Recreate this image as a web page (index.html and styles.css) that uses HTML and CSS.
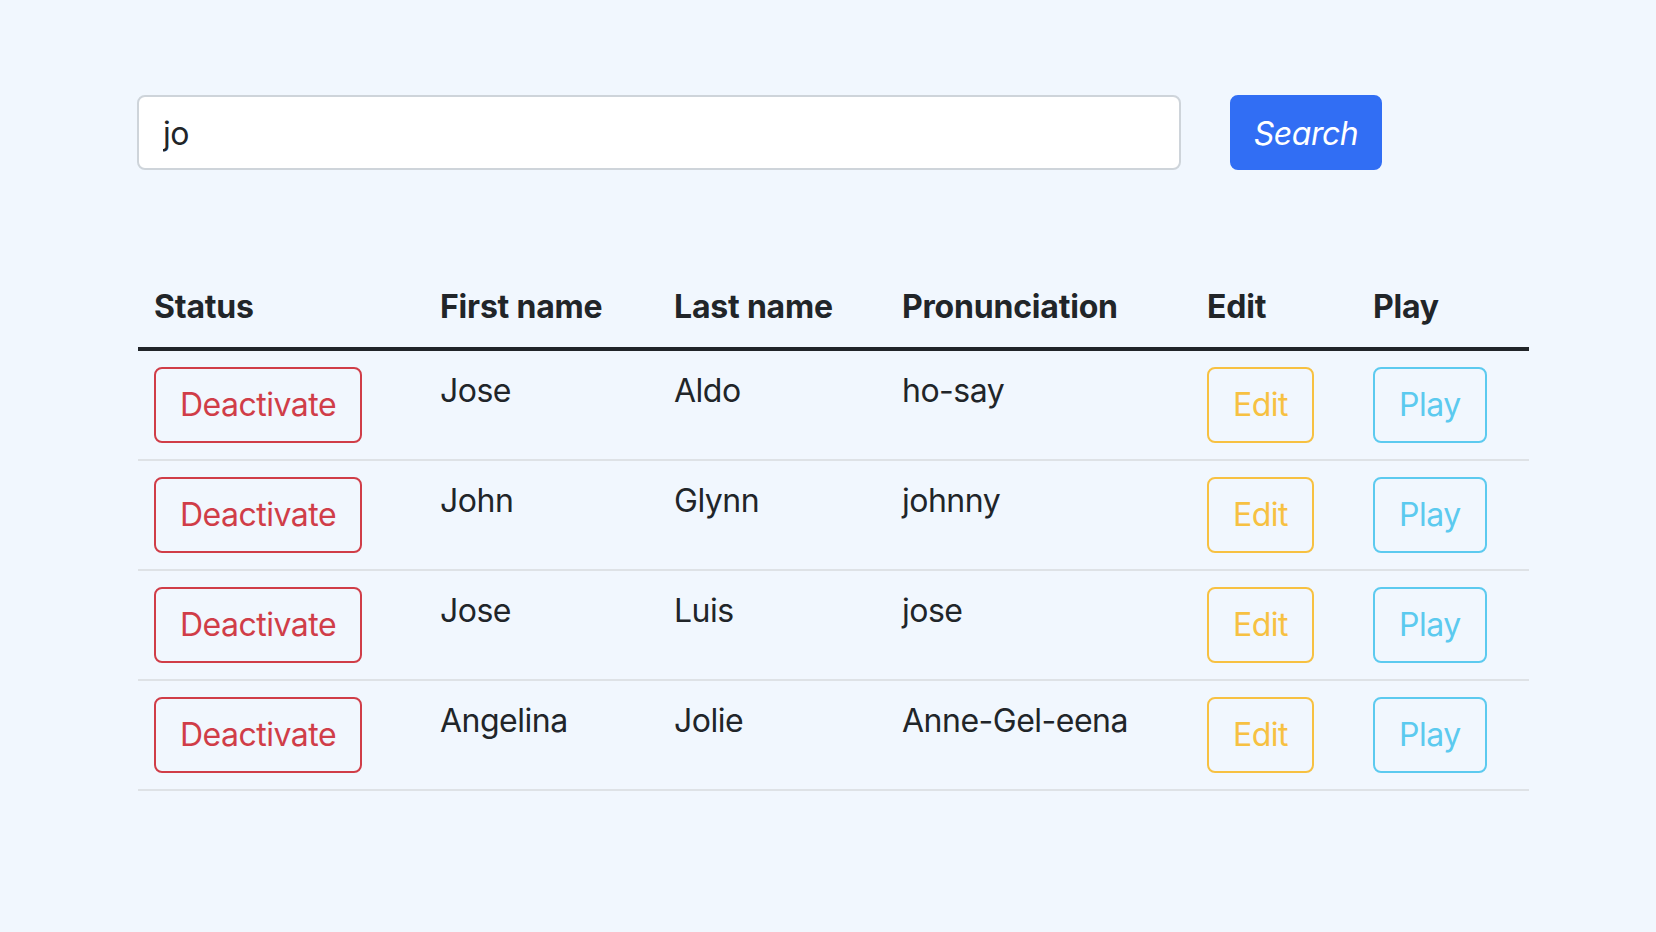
FILE: index.html
```html
<!DOCTYPE html>
<html lang="en">
<head>
<meta charset="utf-8">
<title>Names</title>
<link rel="stylesheet" href="styles.css">
</head>
<body>
<main class="page">
  <form class="search-row">
    <input class="search-input" type="text" value="jo">
    <button class="btn btn-search" type="button">Search</button>
  </form>
  <table class="names">
    <colgroup>
      <col class="c-status"><col class="c-first"><col class="c-last"><col class="c-pron"><col class="c-edit"><col class="c-play">
    </colgroup>
    <thead>
      <tr><th>Status</th><th>First name</th><th>Last name</th><th>Pronunciation</th><th>Edit</th><th>Play</th></tr>
    </thead>
    <tbody>
      <tr><td><button class="btn btn-red">Deactivate</button></td><td>Jose</td><td>Aldo</td><td>ho-say</td><td><button class="btn btn-yellow">Edit</button></td><td><button class="btn btn-cyan">Play</button></td></tr>
      <tr><td><button class="btn btn-red">Deactivate</button></td><td>John</td><td>Glynn</td><td>johnny</td><td><button class="btn btn-yellow">Edit</button></td><td><button class="btn btn-cyan">Play</button></td></tr>
      <tr><td><button class="btn btn-red">Deactivate</button></td><td>Jose</td><td>Luis</td><td>jose</td><td><button class="btn btn-yellow">Edit</button></td><td><button class="btn btn-cyan">Play</button></td></tr>
      <tr><td><button class="btn btn-red">Deactivate</button></td><td>Angelina</td><td>Jolie</td><td>Anne-Gel-eena</td><td><button class="btn btn-yellow">Edit</button></td><td><button class="btn btn-cyan">Play</button></td></tr>
    </tbody>
  </table>
</main>
</body>
</html>
```

FILE: styles.css
```css
html, body {
  margin: 0;
  padding: 0;
}
body {
  background: #f1f7fe;
  color: #212529;
  font-family: Inter, "Noto Sans", "Liberation Sans", sans-serif;
  font-size: 32px;
  line-height: 1.5;
  letter-spacing: -0.5px;
}
.page {
  padding: 95px 0 0 137px;
}
.search-row {
  display: flex;
  gap: 49px;
  margin: 0;
}
.search-input {
  box-sizing: border-box;
  width: 1044px;
  height: 75px;
  padding: 2px 24px 0;
  border: 2px solid #ced4da;
  border-radius: 8px;
  background: #fff;
  color: #212529;
  font-family: inherit;
  font-size: 32px;
  letter-spacing: -0.5px;
  outline: none;
}
.btn {
  box-sizing: border-box;
  height: 76px;
  padding: 0 24px;
  border: 2px solid transparent;
  border-radius: 8px;
  background: transparent;
  font-family: inherit;
  font-size: 32px;
  line-height: 48px;
  letter-spacing: -0.5px;
  cursor: pointer;
}
.btn-search {
  width: 152px;
  height: 75px;
  padding: 2px 0 0;
  background: #316ef4;
  border-color: #316ef4;
  color: #fff;
  font-style: italic;
}
.btn-red { border-color: #d03d48; color: #d03d48; }
.btn-yellow { border-color: #f7c142; color: #f7c142; }
.btn-cyan { border-color: #5ccaef; color: #5ccaef; }

.names {
  margin: 97px 0 0 1px;
  width: 1391px;
  table-layout: fixed;
  border-collapse: collapse;
}
.c-status { width: 286px; }
.c-first { width: 234px; }
.c-last { width: 228px; }
.c-pron { width: 305px; }
.c-edit { width: 166px; }
.c-play { width: 172px; }
.names th, .names td {
  padding: 16px;
  text-align: left;
  vertical-align: top;
  white-space: nowrap;
}
.names th {
  font-weight: 700;
  letter-spacing: -0.2px;
  border-bottom: 4px solid #212529;
}
.names td {
  border-bottom: 2px solid #dee2e6;
}
```
